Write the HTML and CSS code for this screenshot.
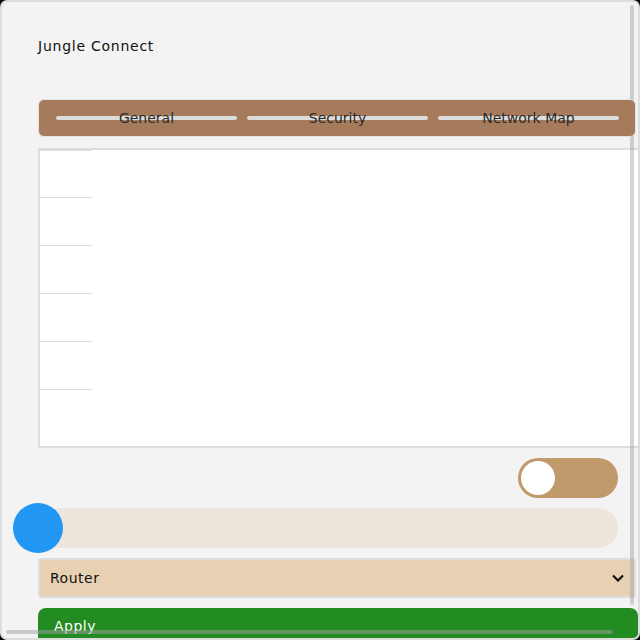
FILE: index.html
```html
<!DOCTYPE html>
<html lang="en">
<head>
<meta charset="utf-8">
<title>Jungle Connect</title>
<link rel="stylesheet" href="styles.css">
</head>
<body>
<div class="window">
  <div class="content">
    <h1 class="title">Jungle Connect</h1>
    <div class="tabs">
      <div class="tab"><span>General</span></div>
      <div class="tab"><span>Security</span></div>
      <div class="tab"><span>Network Map</span></div>
    </div>
    <div class="table">
      <div class="cell"></div>
      <div class="cell"></div>
      <div class="cell"></div>
      <div class="cell"></div>
      <div class="cell"></div>
      <div class="cell last"></div>
    </div>
    <div class="toggle-row">
      <div class="toggle"><div class="knob"></div></div>
    </div>
    <div class="slider">
      <div class="thumb"></div>
    </div>
    <div class="select">
      <span>Router</span>
      <svg class="chev" width="12" height="8" viewBox="0 0 12 8"><polyline points="1,1.5 6,6.5 11,1.5" fill="none" stroke="#111" stroke-width="2.2"/></svg>
    </div>
    <div class="apply">Apply</div>
  </div>
  <div class="vscroll"></div>
  <div class="hscroll"></div>
</div>
</body>
</html>
```
FILE: styles.css
```css
html, body {
  margin: 0;
  padding: 0;
  background: #000;
}
body {
  width: 640px;
  height: 640px;
  font-family: "DejaVu Sans", "Open Sans", sans-serif;
}
.window {
  position: relative;
  box-sizing: border-box;
  width: 640px;
  height: 640px;
  border: 2px solid #dddddd;
  border-radius: 7px;
  background: #f3f3f3;
  overflow: hidden;
}
.content {
  padding: 34px 0 0 36px;
  display: flex;
  flex-direction: column;
}
.title {
  margin: 0;
  font-size: 14px;
  font-weight: normal;
  line-height: 20px;
  color: #111;
  letter-spacing: 0.75px;
}
.tabs {
  position: relative;
  z-index: 2;
  margin-top: 43px;
  box-sizing: border-box;
  width: 598px;
  height: 38px;
  border: 1px solid #e2e2e2;
  border-radius: 6px;
  background: #a67b5b;
  display: flex;
  align-items: center;
  gap: 10px;
  padding: 0 16px 0 17px;
}
.tab {
  flex: 1;
  height: 4px;
  border-radius: 2px;
  background: #dcdcdc;
  display: flex;
  align-items: center;
  justify-content: center;
  font-size: 14px;
  color: #2a2a2a;
  white-space: nowrap;
}
.tab span {
  line-height: 4px;
  margin-top: -1px;
}
.table {
  margin-top: 11px;
  box-sizing: border-box;
  width: 602px;
  height: 300px;
  border: 2px solid #dddddd;
  border-right: none;
  background: #fff;
  display: flex;
  flex-direction: column;
}
.cell {
  width: 52px;
  height: 48px;
  box-sizing: border-box;
  border-bottom: 1px solid #dddddd;
}
.cell:first-child {
  border-top: 1px solid #dddddd;
}
.cell.last {
  border-bottom: none;
  flex: 1;
}
.toggle-row {
  margin-top: 10px;
  width: 580px;
  display: flex;
  justify-content: flex-end;
}
.toggle {
  width: 100px;
  height: 40px;
  border-radius: 20px;
  background: #c19a6b;
  display: flex;
  align-items: center;
  padding-left: 3px;
  box-sizing: border-box;
}
.knob {
  width: 34px;
  height: 34px;
  border-radius: 50%;
  background: #fff;
}
.slider {
  margin-top: 10px;
  width: 580px;
  height: 40px;
  border-radius: 20px;
  background: #eee6dd;
  display: flex;
  align-items: center;
}
.thumb {
  flex: none;
  margin-left: -25px;
  width: 50px;
  height: 50px;
  border-radius: 50%;
  background: #2196f3;
}
.select {
  margin-top: 10px;
  box-sizing: border-box;
  width: 598px;
  height: 40px;
  border: 2px solid #dddddd;
  border-radius: 4px;
  background: #e8d1b3;
  display: flex;
  align-items: center;
  justify-content: space-between;
  padding: 0 10px 0 10px;
  font-size: 14px;
  color: #111;
  letter-spacing: 0.5px;
}
.chev {
  display: block;
}
.apply {
  margin-top: 10px;
  box-sizing: border-box;
  width: 600px;
  height: 44px;
  border-radius: 8px;
  background: #228b22;
  color: #fff;
  font-size: 14px;
  padding: 8px 16px;
  line-height: 20px;
  letter-spacing: 0.5px;
}
.vscroll {
  position: absolute;
  z-index: 1;
  top: 3px;
  right: 4px;
  width: 4px;
  height: 600px;
  border-radius: 2px;
  background: rgba(160, 160, 160, 0.45);
}
.hscroll {
  position: absolute;
  z-index: 3;
  left: 4px;
  bottom: 4px;
  width: 607px;
  height: 4px;
  border-radius: 2px;
  background: rgba(160, 160, 160, 0.5);
}
```
